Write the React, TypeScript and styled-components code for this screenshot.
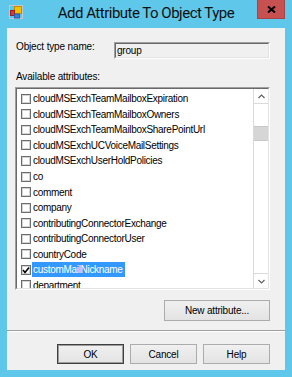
import React from "react";
import styled, { createGlobalStyle } from "styled-components";

const Global = createGlobalStyle`
  html, body { margin: 0; padding: 0; background: #5ec7ea; }
  body { font-family: "Liberation Sans", Arial, sans-serif; }
  * { box-sizing: border-box; }
`;

const Window = styled.div`
  width: 292px;
  height: 377px;
  background: #5ec7ea;
  padding: 0 7px 7px;
  display: flex;
  flex-direction: column;
`;

const TitleBar = styled.div`
  height: 28px;
  flex: none;
  display: grid;
  grid-template-columns: 1fr auto 1fr;
  align-items: start;
`;

const AppIcon = styled.svg`
  margin: 5px 0 0 2px;
  display: block;
`;

const Title = styled.div`
  margin-top: 3px;
  font-family: Roboto, "Liberation Sans", sans-serif;
  font-size: 15px;
  line-height: 20px;
  letter-spacing: -0.5px;
  color: #111;
  white-space: nowrap;
`;

const CloseButton = styled.div`
  justify-self: end;
  width: 28px;
  height: 19px;
  background: #c75050;
  border: 1px solid #a94343;
  border-top: none;
  display: flex;
  align-items: center;
  justify-content: center;
  padding-left: 1px;
`;

const Client = styled.div`
  flex: 1;
  background: #f0f0f0;
  display: flex;
  flex-direction: column;
  font-size: 10px;
  color: #000;
`;

const Body = styled.div`
  padding: 13px 15px 0 8px;
  display: flex;
  flex-direction: column;
`;

const NameRow = styled.div`
  display: grid;
  grid-template-columns: 98px 1fr;
  padding-left: 1px;
  align-items: start;
`;

const Label = styled.div<{ $top?: number }>`
  font-size: 10px;
  line-height: 12px;
  letter-spacing: -0.15px;
  margin-top: ${(p) => p.$top ?? 0}px;
  white-space: nowrap;
`;

const ReadonlyField = styled.div`
  margin-top: 1px;
  height: 17px;
  border: 1px solid;
  border-color: #a0a0a0 #ffffff #ffffff #a0a0a0;
  background: #f0f0f0;
`;

const FieldInner = styled.div`
  height: 100%;
  border: 1px solid;
  border-color: #696969 #e3e3e3 #e3e3e3 #696969;
  padding: 0 1px;
  line-height: 13px;
  letter-spacing: -0.2px;
`;

const AttrLabel = styled(Label)`
  padding-left: 1px;
`;

const ListOuter = styled.div`
  margin-top: 4px;
  height: 203px;
  border: 1px solid;
  border-color: #a0a0a0 #ffffff #ffffff #a0a0a0;
`;

const ListInner = styled.div`
  height: 100%;
  border: 1px solid;
  border-color: #696969 #e3e3e3 #e3e3e3 #696969;
  background: #fff;
  display: flex;
  overflow: hidden;
`;

const Items = styled.div`
  flex: 1;
  padding-top: 2px;
  overflow: hidden;
`;

const Row = styled.div`
  height: 15.56px;
  display: flex;
  align-items: center;
  padding-left: 3.5px;
  white-space: nowrap;
`;

const Check = styled.span`
  flex: none;
  width: 10px;
  height: 10px;
  border: 1px solid #6d6d6d;
  box-shadow: inset 0 0 0 1px #d4d4d4;
  background: #fff;
  margin-right: 1px;
  display: flex;
  align-items: center;
  justify-content: center;
`;

const ItemText = styled.span<{ $selected?: boolean }>`
  padding: 0 2px 0 1.5px;
  line-height: 15px;
  letter-spacing: -0.3px;
  background: ${(p) => (p.$selected ? "#3399ff" : "transparent")};
  color: ${(p) => (p.$selected ? "#fff" : "#000")};
`;

const ScrollBar = styled.div`
  flex: none;
  width: 15px;
  border-left: 1px solid #dadada;
  display: flex;
  flex-direction: column;
  background: #fff;
`;

const ScrollArrow = styled.div<{ $down?: boolean }>`
  height: 15px;
  flex: none;
  display: flex;
  align-items: center;
  justify-content: center;
  border-${(p) => (p.$down ? "top" : "bottom")}: 1px solid #dadada;
`;

const Track = styled.div`
  flex: 1;
`;

const Thumb = styled.div`
  margin-top: 22px;
  height: 15px;
  background: #d6d6d6;
  border-top: 1px solid #c8c8c8;
  border-bottom: 1px solid #c8c8c8;
`;

const ButtonRow = styled.div<{ $top: number }>`
  display: flex;
  justify-content: flex-end;
  gap: 6px;
  margin-top: ${(p) => p.$top}px;
`;

const Button = styled.button<{ $w: number; $h: number; $default?: boolean }>`
  width: ${(p) => p.$w}px;
  height: ${(p) => p.$h}px;
  padding: 0;
  font-family: "Liberation Sans", Arial, sans-serif;
  font-size: 10px;
  letter-spacing: -0.2px;
  color: #000;
  background: linear-gradient(#f0f0f0, #e3e3e3);
  border: 1px solid ${(p) => (p.$default ? "#3f3f3f" : "#acacac")};
  box-shadow: ${(p) => (p.$default ? "inset 0 0 0 1px #9c9c9c" : "none")};
`;

const Separator = styled.div`
  margin-top: 9px;
  height: 2px;
  border-top: 1px solid #a0a0a0;
  border-bottom: 1px solid #ffffff;
`;

const Footer = styled.div`
  padding: 12px 15px 6px 0;
`;

const items = [
  "cloudMSExchTeamMailboxExpiration",
  "cloudMSExchTeamMailboxOwners",
  "cloudMSExchTeamMailboxSharePointUrl",
  "cloudMSExchUCVoiceMailSettings",
  "cloudMSExchUserHoldPolicies",
  "co",
  "comment",
  "company",
  "contributingConnectorExchange",
  "contributingConnectorUser",
  "countryCode",
  "customMailNickname",
  "department",
];

const Chevron = ({ down }: { down?: boolean }) => (
  <svg width="7" height="5" viewBox="0 0 7 5">
    <polyline
      points={down ? "0.5,1 3.5,4 6.5,1" : "0.5,4 3.5,1 6.5,4"}
      fill="none"
      stroke="#606060"
      strokeWidth="1.2"
    />
  </svg>
);

export default function App() {
  return (
    <>
      <Global />
      <Window>
        <TitleBar>
          <AppIcon width="14" height="14" viewBox="0 0 14 14">
            <rect x="0.5" y="0.5" width="13" height="13" fill="none" stroke="#c4c8cc" />
            <line x1="0.5" y1="7" x2="5" y2="7" stroke="#c4c8cc" />
            <rect x="5.5" y="1.5" width="7" height="7" fill="#f2c200" stroke="#c08a00" />
            <rect x="1.5" y="5.5" width="4" height="5" fill="#d63a3a" stroke="#9e1c1c" />
            <rect x="5.5" y="9" width="5" height="4" fill="#3d7fd8" stroke="#2a5ea8" />
          </AppIcon>
          <Title>Add Attribute To Object Type</Title>
          <CloseButton>
            <svg width="9" height="7" viewBox="0 0 9 7">
              <path d="M1 0.5 L8 6.5 M8 0.5 L1 6.5" stroke="#000" strokeWidth="2" />
            </svg>
          </CloseButton>
        </TitleBar>
        <Client>
          <Body>
            <NameRow>
              <Label>Object type name:</Label>
              <ReadonlyField>
                <FieldInner>group</FieldInner>
              </ReadonlyField>
            </NameRow>
            <AttrLabel $top={12}>Available attributes:</AttrLabel>
            <ListOuter>
              <ListInner>
                <Items>
                  {items.map((name) => {
                    const selected = name === "customMailNickname";
                    return (
                      <Row key={name}>
                        <Check>
                          {selected && (
                            <svg width="8" height="8" viewBox="0 0 8 8">
                              <polyline
                                points="1,4 3,6.5 7,1.5"
                                fill="none"
                                stroke="#000"
                                strokeWidth="1.6"
                              />
                            </svg>
                          )}
                        </Check>
                        <ItemText $selected={selected}>{name}</ItemText>
                      </Row>
                    );
                  })}
                </Items>
                <ScrollBar>
                  <ScrollArrow>
                    <Chevron />
                  </ScrollArrow>
                  <Track>
                    <Thumb />
                  </Track>
                  <ScrollArrow $down>
                    <Chevron down />
                  </ScrollArrow>
                </ScrollBar>
              </ListInner>
            </ListOuter>
            <ButtonRow $top={10}>
              <Button $w={106} $h={21}>New attribute...</Button>
            </ButtonRow>
          </Body>
          <Separator />
          <Footer>
            <ButtonRow $top={0}>
              <Button $w={67} $h={20} $default>OK</Button>
              <Button $w={67} $h={20}>Cancel</Button>
              <Button $w={67} $h={20}>Help</Button>
            </ButtonRow>
          </Footer>
        </Client>
      </Window>
    </>
  );
}
